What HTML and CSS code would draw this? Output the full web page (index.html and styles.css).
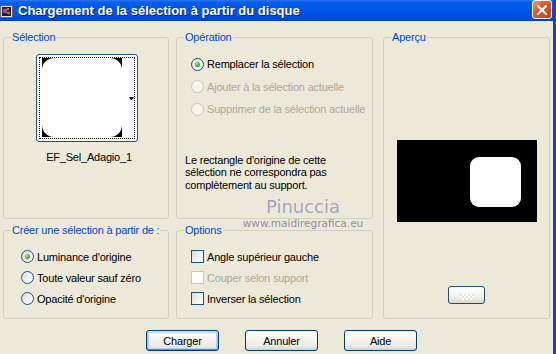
FILE: index.html
```html
<!DOCTYPE html>
<html lang="fr">
<head>
  <meta charset="UTF-8">
  <title>Chargement de la sélection à partir du disque</title>
  <link rel="stylesheet" href="styles.css">
</head>
<body>
  <div class="window">
    <div class="titlebar">
      <svg class="app-icon" width="13" height="15" viewBox="0 0 13 15">
        <rect x="0.5" y="1.5" width="12" height="12" fill="#dfe6f2" stroke="#5a6478"/>
        <rect x="2" y="3" width="9" height="9" fill="#231a2e"/>
        <circle cx="5" cy="7" r="2.4" fill="#b0409a"/>
        <circle cx="8.5" cy="9" r="1.6" fill="#3fa04a"/>
        <circle cx="8" cy="5" r="1" fill="#e0c040"/>
      </svg>
      <span class="title">Chargement de la sélection à partir du disque</span>
      <button class="close">
        <svg width="10" height="10" viewBox="0 0 10 10">
          <path d="M1 1 L9 9 M9 1 L1 9" stroke="#fff" stroke-width="2" stroke-linecap="square"/>
        </svg>
      </button>
    </div>

    <div class="panels">
      <fieldset class="group sel">
        <legend>Sélection</legend>
        <div class="thumb">
          <div class="focus">
            <div class="sel-img"><div></div></div>
            <span class="drop"></span>
          </div>
        </div>
        <div class="sel-name">EF_Sel_Adagio_1</div>
      </fieldset>

      <fieldset class="group op">
        <legend>Opération</legend>
        <div class="opt-list">
          <label class="opt"><span class="radio checked"></span>Remplacer la sélection</label>
          <label class="opt disabled"><span class="radio"></span>Ajouter à la sélection actuelle</label>
          <label class="opt disabled"><span class="radio"></span>Supprimer de la sélection actuelle</label>
        </div>
        <p class="note">Le rectangle d'origine de cette<br>sélection ne correspondra pas<br>complètement au support.</p>
      </fieldset>

      <fieldset class="group preview">
        <legend>Aperçu</legend>
        <div class="preview-img"><div></div></div>
        <button class="mini"><span></span></button>
      </fieldset>

      <fieldset class="group create">
        <legend>Créer une sélection à partir de :</legend>
        <div class="opt-list">
          <label class="opt"><span class="radio checked"></span>Luminance d'origine</label>
          <label class="opt"><span class="radio"></span>Toute valeur sauf zéro</label>
          <label class="opt"><span class="radio"></span>Opacité d'origine</label>
        </div>
      </fieldset>

      <fieldset class="group options">
        <legend>Options</legend>
        <div class="opt-list">
          <label class="opt"><span class="box"></span>Angle supérieur gauche</label>
          <label class="opt disabled"><span class="box"></span>Couper selon support</label>
          <label class="opt"><span class="box"></span>Inverser la sélection</label>
        </div>
      </fieldset>
    </div>

    <div class="actions">
      <button class="btn default">Charger</button>
      <button class="btn">Annuler</button>
      <button class="btn">Aide</button>
    </div>

    <div class="watermark">
      <span class="wm-name">Pinuccia</span>
      <span class="wm-url">www.maidiregrafica.eu</span>
    </div>
  </div>
</body>
</html>
```

FILE: styles.css
```css
body {
  margin: 0;
  font-family: "Liberation Sans", Arial, sans-serif;
  font-size: 11px;
  letter-spacing: -0.2px;
  color: #000;
  background: #ece9d8;
}
.window {
  position: relative;
  width: 556px;
  height: 354px;
  box-sizing: border-box;
  background: #ece9d8;
  border-right: 3px solid #0845d8;
  overflow: hidden;
}
.titlebar {
  height: 21px;
  display: flex;
  align-items: center;
  background: linear-gradient(to bottom, #2a7af4 0, #0a5fea 2px, #0058ee 6px, #0055e5 13px, #004bd9 18px, #0040c8 21px);
}
.app-icon {
  flex: none;
  margin-top: 1px;
}
.title {
  margin-left: 5px;
  color: #fff;
  font-weight: bold;
  font-size: 13px;
  letter-spacing: 0;
  text-shadow: 1px 1px #0a1e8a;
}
.close {
  align-self: flex-start;
  margin-left: auto;
  margin-right: 1px;
  width: 20px;
  height: 19px;
  padding: 0;
  display: flex;
  align-items: center;
  justify-content: center;
  border: 1px solid #fff;
  border-radius: 3px;
  background: linear-gradient(135deg, #eb9a7b 0, #dc5a31 40%, #c6421a 100%);
}

.panels {
  display: grid;
  grid-template-columns: 166px 197px 170px;
  grid-template-rows: 188px 95px;
  column-gap: 7px;
  row-gap: 5px;
  padding: 10px 0 0 3px;
}
.group {
  margin: 0;
  padding: 0;
  min-width: 0;
  border: 1px solid #d0d0bf;
  border-radius: 3px;
}
.group legend {
  margin-left: 7px;
  padding: 0 1px;
  line-height: 13px;
  color: #0046d5;
}
.preview {
  grid-column: 3;
  grid-row: 1 / span 2;
  margin-left: 3px;
}

/* sélection */
.thumb {
  width: 102px;
  height: 88px;
  box-sizing: border-box;
  margin: 10px 0 0 32px;
  padding: 2px;
  border: 1px solid #1d5281;
  border-radius: 3px;
  background: #fff;
}
.focus {
  height: 100%;
  box-sizing: border-box;
  border: 1px dotted #000;
  display: flex;
  align-items: flex-start;
}
.sel-img {
  width: 81px;
  height: 79px;
  margin-left: 2px;
  background: #000;
}
.sel-img div {
  height: 100%;
  background: #fff;
  border-radius: 12px;
}
.drop {
  align-self: center;
  width: 1px;
  height: 0;
  margin-left: 7px;
  border-left: 2px solid transparent;
  border-right: 2px solid transparent;
  border-top: 3px solid #000;
}
.sel-name {
  margin-top: 9px;
  padding-left: 6px;
  line-height: 13px;
  text-align: center;
}

/* radios and checkboxes */
.opt-list {
  padding: 9px 0 0 14px;
}
.op .opt-list {
  padding-top: 9px;
}
.create .opt-list {
  padding-left: 17px;
}
.opt {
  display: flex;
  align-items: center;
  height: 21px;
}
.op .opt {
  height: 22.5px;
}
.opt.disabled {
  color: #aca899;
}
.radio,
.box {
  flex: none;
  width: 13px;
  height: 13px;
  box-sizing: border-box;
  margin-right: 3px;
  border: 1px solid #1c5180;
  background: linear-gradient(135deg, #dcdcd7 0, #f4f4f0 60%, #fff 100%);
  display: flex;
  align-items: center;
  justify-content: center;
}
.radio {
  border-radius: 50%;
}
.radio.checked::after {
  content: "";
  width: 5px;
  height: 5px;
  border-radius: 50%;
  background: radial-gradient(circle at 35% 35%, #a6f2a2 0, #3cbc38 45%, #1d9a1d 100%);
}
.disabled .radio,
.disabled .box {
  border-color: #cac8bb;
  background: #f5f4ea;
}
.disabled .box {
  background: #fff;
}
.note {
  margin: 33px 0 0;
  padding-left: 8px;
  line-height: 12.5px;
}

/* aperçu */
.preview-img {
  width: 140px;
  height: 82px;
  box-sizing: border-box;
  margin: 96px auto 0;
  padding: 17px 0 0 73px;
  background: #000;
}
.preview-img div {
  width: 51px;
  height: 50px;
  background: #fff;
  border-radius: 9px;
}
.mini {
  display: block;
  width: 37px;
  height: 18px;
  margin: 64px auto 0;
  padding: 0;
  border: 1px solid #1b4f7e;
  border-radius: 3px;
  background: linear-gradient(#fff, #f2f1ec 60%, #dcd8cc);
}
.mini span {
  display: block;
  width: 14px;
  height: 6px;
  margin: 4px auto 0;
  background: repeating-conic-gradient(#fff 0 25%, #e4e1d8 0 50%) 0 0 / 4px 4px;
}

/* buttons */
.actions {
  display: flex;
  justify-content: center;
  gap: 26px;
  margin-top: 11px;
  padding-left: 10px;
}
.btn {
  width: 73px;
  height: 21px;
  padding: 0;
  font-family: inherit;
  font-size: 11px;
  letter-spacing: -0.2px;
  color: #000;
  border: 1px solid #003c74;
  border-radius: 3px;
  background: linear-gradient(#fff 0, #f4f3ee 45%, #ecebe6 80%, #d6d0c5 100%);
}
.btn.default {
  box-shadow: inset 0 1px #cee7ff, inset 0 -1px #6982ee, inset 1px 0 #9cbef6, inset -1px 0 #9cbef6, inset 0 0 0 2px #b9d1f8;
}

/* watermark */
.watermark {
  position: absolute;
  left: 242px;
  top: 196px;
  display: flex;
  flex-direction: column;
  align-items: center;
  width: 122px;
  font-family: "DejaVu Sans", Verdana, sans-serif;
  letter-spacing: 0;
}
.wm-name {
  font-size: 18px;
  line-height: 21px;
  color: #a2a2ba;
  text-shadow: 0 0 1px #fff;
}
.wm-url {
  font-size: 10.5px;
  line-height: 13px;
  color: #8e8ea6;
}
```
